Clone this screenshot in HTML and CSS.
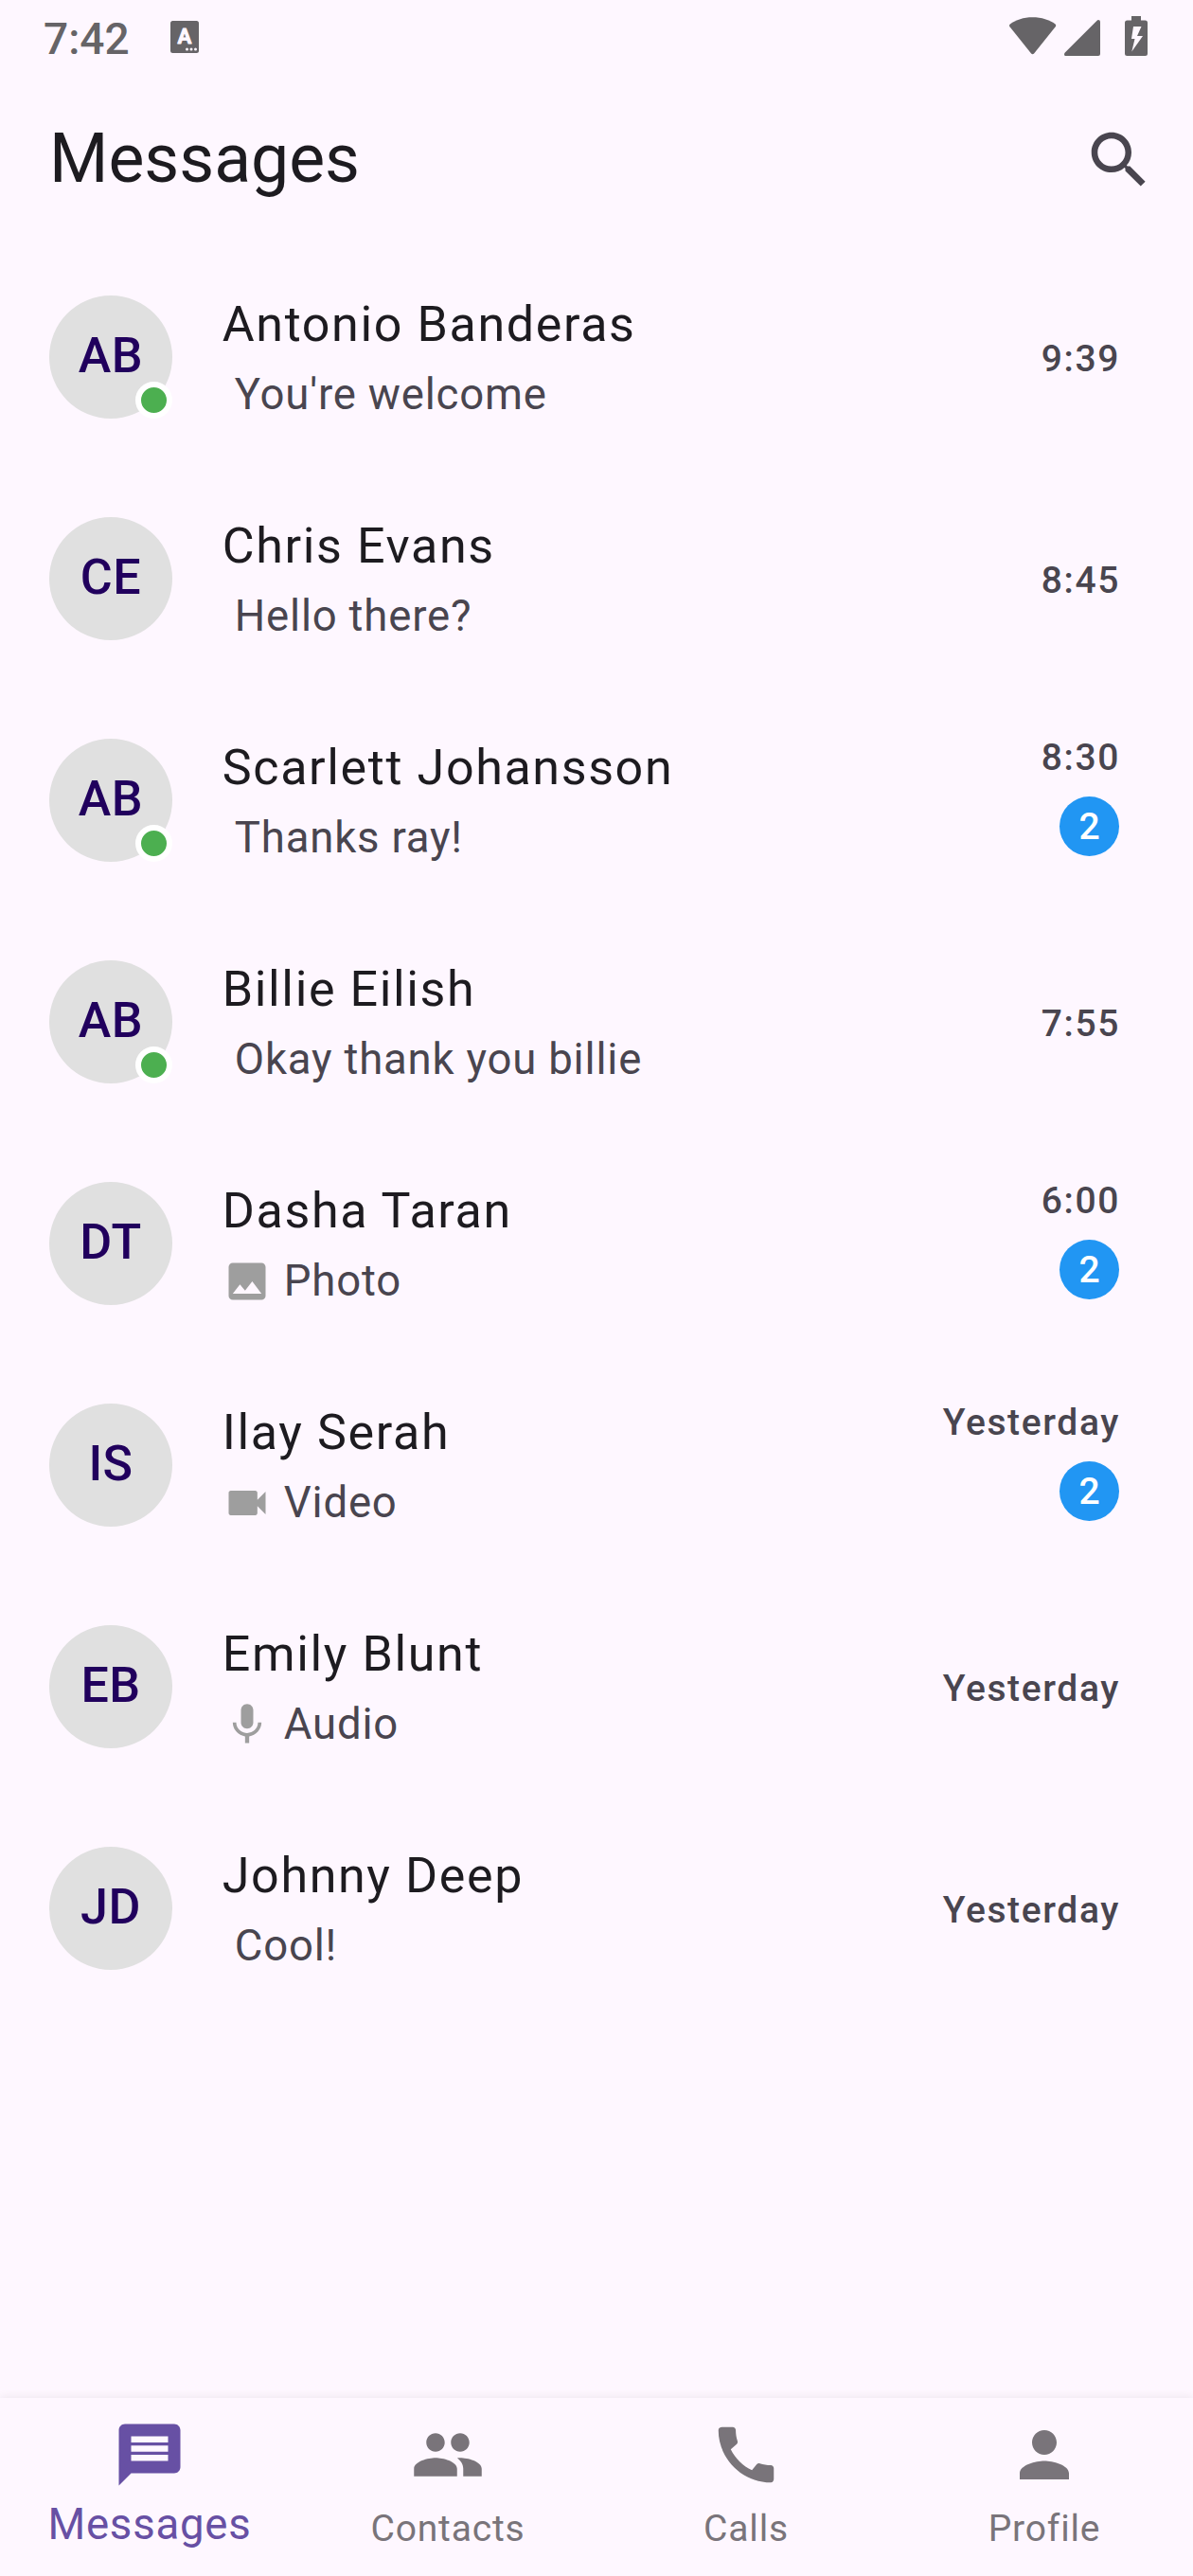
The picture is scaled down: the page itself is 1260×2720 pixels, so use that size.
FILE: index.html
```html
<!DOCTYPE html>
<html lang="en">
<head>
<meta charset="utf-8">
<title>Messages</title>
<link rel="stylesheet" href="styles.css">
</head>
<body>
<div class="app">
  <div class="status">
    <span class="clock">7:42</span>
    <svg class="status-app" width="30" height="34" viewBox="0 0 30 34"><rect width="30" height="34" rx="2.5"/><text x="15" y="24.3" text-anchor="middle">A</text><g class="dots"><circle cx="17.5" cy="30" r="1.5"/><circle cx="22" cy="30" r="1.5"/><circle cx="26.5" cy="30" r="1.5"/></g></svg>
    <div class="status-icons">
      <svg class="wifi" width="50" height="40" viewBox="0 0 50 40"><path d="M.8 7.4C7 3 15 .3 24.5.3S42.500 3 48.600 7.400Q49.800 8.600 48.700 10.200L26.300 38.200Q24.600 40.100 22.900 38.200L.5 10.200Q-.600 8.600 .8 7.400Z"/></svg>
      <svg class="signal" width="38" height="38" viewBox="0 0 38 38"><path d="M34.600.7Q35.300 0 36 0Q38 0 38 2V36Q38 38 36 38H1.500Q0 38 0 36.500Q0 35.300 .8 34.500Z"/></svg>
      <svg class="battery" width="24" height="42" viewBox="0 0 24 42"><path fill-rule="evenodd" d="M7 0H17V4.500H21.500Q24 4.500 24 7V39.500Q24 42 21.500 42H2.500Q0 42 0 39.500V7Q0 4.500 2.500 4.500H7ZM9 11L7 24H10.500L7.300 37.500L19 21H13L17.500 11Z"/></svg>
    </div>
  </div>

  <header class="topbar">
    <h1>Messages</h1>
    <svg class="search" viewBox="0 0 24 24"><path d="M15.500 14h-.79l-.28-.27C15.410 12.590 16 11.110 16 9.500 16 5.910 13.090 3 9.500 3S3 5.910 3 9.500 5.910 16 9.500 16c1.610 0 3.090-.59 4.230-1.570l.27.28v.79l5 4.990L20.490 19l-4.990-5zm-6 0C7.010 14 5 11.990 5 9.500S7.010 5 9.500 5 14 7.010 14 9.500 11.990 14 9.500 14z"/></svg>
  </header>

  <main class="list">
    <div class="row">
      <div class="avatar">AB<i class="online"></i></div>
      <div class="body"><div class="name">Antonio Banderas</div><div class="preview"><span>You're welcome</span></div></div>
      <div class="meta"><span class="time">9:39</span></div>
    </div>
    <div class="row">
      <div class="avatar">CE</div>
      <div class="body"><div class="name">Chris Evans</div><div class="preview"><span>Hello there?</span></div></div>
      <div class="meta"><span class="time">8:45</span></div>
    </div>
    <div class="row">
      <div class="avatar">AB<i class="online"></i></div>
      <div class="body"><div class="name">Scarlett Johansson</div><div class="preview"><span>Thanks ray!</span></div></div>
      <div class="meta unread"><span class="time">8:30</span><span class="badge">2</span></div>
    </div>
    <div class="row">
      <div class="avatar">AB<i class="online"></i></div>
      <div class="body"><div class="name">Billie Eilish</div><div class="preview"><span>Okay thank you billie</span></div></div>
      <div class="meta"><span class="time">7:55</span></div>
    </div>
    <div class="row">
      <div class="avatar">DT</div>
      <div class="body"><div class="name">Dasha Taran</div><div class="preview"><svg viewBox="0 0 24 24"><path d="M21 19V5c0-1.100-.9-2-2-2H5c-1.100 0-2 .9-2 2v14c0 1.100.9 2 2 2h14c1.100 0 2-.9 2-2zM8.500 13.500l2.500 3.010L14.500 12l4.500 6H5l3.500-4.500z"/></svg><span>Photo</span></div></div>
      <div class="meta unread"><span class="time">6:00</span><span class="badge">2</span></div>
    </div>
    <div class="row">
      <div class="avatar">IS</div>
      <div class="body"><div class="name">Ilay Serah</div><div class="preview"><svg viewBox="0 0 24 24"><path d="M17 10.500V7c0-.55-.45-1-1-1H4c-.55 0-1 .45-1 1v10c0 .55.45 1 1 1h12c.55 0 1-.45 1-1v-3.500l4 4v-11l-4 4z"/></svg><span>Video</span></div></div>
      <div class="meta unread"><span class="time">Yesterday</span><span class="badge">2</span></div>
    </div>
    <div class="row">
      <div class="avatar">EB</div>
      <div class="body"><div class="name">Emily Blunt</div><div class="preview"><svg viewBox="0 0 24 24"><path d="M12 14c1.660 0 2.990-1.340 2.990-3L15 5c0-1.660-1.340-3-3-3S9 3.340 9 5v6c0 1.660 1.340 3 3 3zm5.300-3c0 3-2.540 5.100-5.300 5.100S6.700 14 6.700 11H5c0 3.410 2.720 6.230 6 6.720V21h2v-3.280c3.280-.48 6-3.300 6-6.720h-1.700z"/></svg><span>Audio</span></div></div>
      <div class="meta"><span class="time">Yesterday</span></div>
    </div>
    <div class="row">
      <div class="avatar">JD</div>
      <div class="body"><div class="name">Johnny Deep</div><div class="preview"><span>Cool!</span></div></div>
      <div class="meta"><span class="time">Yesterday</span></div>
    </div>
  </main>

  <nav class="tabs">
    <div class="tab active"><svg viewBox="0 0 24 24"><path d="M20 2H4c-1.100 0-1.990.9-1.990 2L2 22l4-4h14c1.100 0 2-.9 2-2V4c0-1.100-.9-2-2-2zm-2 12H6v-2h12v2zm0-3H6V9h12v2zm0-3H6V6h12v2z"/></svg><span>Messages</span></div>
    <div class="tab"><svg viewBox="0 0 24 24"><path d="M16 11c1.660 0 2.990-1.340 2.990-3S17.660 5 16 5c-1.660 0-3 1.340-3 3s1.340 3 3 3zm-8 0c1.660 0 2.990-1.340 2.990-3S9.660 5 8 5C6.340 5 5 6.340 5 8s1.340 3 3 3zm0 2c-2.330 0-7 1.170-7 3.500V19h14v-2.500c0-2.330-4.670-3.500-7-3.500zm8 0c-.29 0-.62.02-.97.05 1.160.84 1.970 1.970 1.970 3.450V19h6v-2.500c0-2.330-4.670-3.500-7-3.500z"/></svg><span>Contacts</span></div>
    <div class="tab"><svg viewBox="0 0 24 24"><path d="M20.010 15.380c-1.230 0-2.420-.2-3.530-.56-.35-.12-.74-.03-1.010.24l-1.570 1.970c-2.830-1.350-5.480-3.900-6.890-6.830l1.950-1.660c.27-.28.35-.67.24-1.020-.37-1.110-.56-2.300-.56-3.530 0-.54-.45-.99-.99-.99H4.190C3.650 3 3 3.240 3 3.990 3 13.280 10.730 21 20.010 21c.71 0 .99-.63.99-1.180v-3.450c0-.54-.45-.99-.99-.99z"/></svg><span>Calls</span></div>
    <div class="tab"><svg viewBox="0 0 24 24"><path d="M12 12c2.210 0 4-1.790 4-4s-1.790-4-4-4-4 1.790-4 4 1.790 4 4 4zm0 2c-2.670 0-8 1.340-8 4v2h16v-2c0-2.660-5.330-4-8-4z"/></svg><span>Profile</span></div>
  </nav>
</div>
</body>
</html>
```

FILE: styles.css
```css
* { box-sizing: border-box; }

body {
  margin: 0;
  background: #fef7ff;
  font-family: Roboto, sans-serif;
  color: #1d1b20;
}

.app {
  width: 1260px;
  height: 2720px;
  display: flex;
  flex-direction: column;
}

/* System status bar */
.status {
  height: 78px;
  display: flex;
  align-items: flex-start;
  padding: 0 48px 0 46px;
  color: #666467;
  fill: #666467;
}
.clock {
  width: 134px;
  padding-top: 14px;
  font-size: 46px;
  line-height: 54px;
  font-weight: 500;
}
.status-app { margin-top: 22px; }
.status-app text {
  font-size: 22px;
  font-weight: 700;
  fill: #fef7ff;
  stroke: #fef7ff;
  stroke-width: .8;
  stroke-linejoin: round;
}
.dots { fill: #fef7ff; }
.status-icons {
  margin-left: auto;
  display: flex;
  align-items: flex-start;
}
.wifi { margin-top: 18px; }
.signal { margin: 21px 26px 0 8px; }
.battery { margin-top: 17px; }

/* App bar */
.topbar {
  height: 182px;
  display: flex;
  align-items: center;
  justify-content: space-between;
  padding: 0 39px 0 52px;
}
.topbar h1 {
  margin: 0;
  padding-bottom: 2px;
  font-size: 71.5px;
  line-height: 90px;
  font-weight: 400;
}
.search { width: 78px; height: 78px; fill: #49454f; }

/* Conversations */
.list { flex: 1; }
.row {
  height: 234px;
  display: flex;
  align-items: center;
  gap: 52px;
  padding: 0 77px 0 52px;
}
.avatar {
  position: relative;
  width: 130px;
  height: 130px;
  border-radius: 50%;
  background: #e0e0e0;
  color: #21005d;
  font-size: 52px;
  line-height: 128px;
  font-weight: 500;
  letter-spacing: .5px;
  text-align: center;
}
.online {
  position: absolute;
  right: 0;
  bottom: 0;
  width: 39px;
  height: 39px;
  border: 6.5px solid #fff;
  border-radius: 50%;
  background: #4caf50;
}
.body { flex: 1; padding-left: .8px; }
.name {
  font-size: 52px;
  line-height: 78px;
  letter-spacing: 1.625px;
}
.preview {
  display: flex;
  align-items: center;
  margin: 2px 0 1px;
  font-size: 45.5px;
  line-height: 65px;
  letter-spacing: .8125px;
  color: #49454f;
}
.preview svg { width: 52px; height: 52px; fill: #9e9e9e; }
.preview span { padding-left: 13px; }
.meta {
  display: flex;
  flex-direction: column;
  align-items: flex-end;
  gap: 15px;
  padding-top: 3px;
}
.unread { padding: 0 0 12px; }
.time {
  font-size: 39px;
  line-height: 52px;
  font-weight: 500;
  letter-spacing: 1.625px;
  color: #49454f;
}
.badge {
  width: 63px;
  height: 63px;
  margin-right: 1px;
  border-radius: 50%;
  background: #2196f3;
  color: #fff;
  font-size: 39px;
  line-height: 64px;
  font-weight: 500;
  text-align: center;
}

/* Bottom navigation */
.tabs {
  height: 188.5px;
  display: flex;
  background: #fef7ff;
  box-shadow: 0 -2px 8px rgba(0, 0, 0, .06);
}
.tab {
  flex: 1;
  display: flex;
  flex-direction: column;
  align-items: center;
  padding-top: 21.5px;
  color: #79747a;
  fill: #79747a;
  font-size: 39px;
  line-height: 60px;
  letter-spacing: .8125px;
}
.tab svg { width: 78px; height: 78px; }
.tab span { margin-top: 9px; padding-left: 1px; }
.active {
  color: #6750a4;
  fill: #6750a4;
  font-size: 45.5px;
}
.active span { margin-top: 5px; }
```
